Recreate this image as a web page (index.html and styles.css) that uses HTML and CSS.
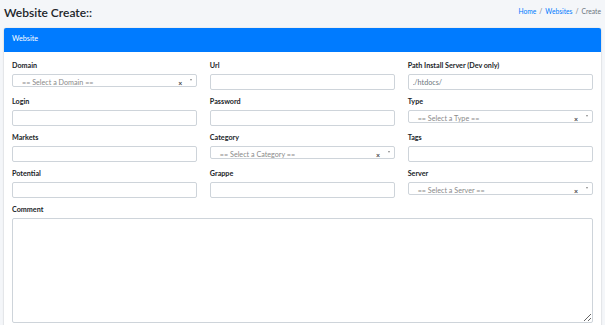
FILE: index.html
```html
<!DOCTYPE html>
<html lang="en">
<head>
    <meta charset="UTF-8">
    <title>Website Create</title>
    <link rel="stylesheet" href="styles.css">
</head>
<body>

<div class="content-header">
    <h1>Website Create::</h1>
    <ol class="breadcrumb">
        <li><a href="#">Home</a></li>
        <li class="sep">/</li>
        <li><a href="#">Websites</a></li>
        <li class="sep">/</li>
        <li class="active">Create</li>
    </ol>
</div>

<div class="card">
    <div class="card-header">Website</div>
    <div class="card-body">
        <div class="form-grid">
            <div class="form-group">
                <label>Domain</label>
                <div class="select2"><span class="sel-text">== Select a Domain ==</span><span class="sel-clear">×</span><span class="sel-arrow"></span></div>
            </div>
            <div class="form-group">
                <label>Url</label>
                <input class="form-control" type="text">
            </div>
            <div class="form-group">
                <label>Path Install Server (Dev only)</label>
                <input class="form-control" type="text" placeholder="./htdocs/">
            </div>

            <div class="form-group">
                <label>Login</label>
                <input class="form-control" type="text">
            </div>
            <div class="form-group">
                <label>Password</label>
                <input class="form-control" type="text">
            </div>
            <div class="form-group">
                <label>Type</label>
                <div class="select2"><span class="sel-text">== Select a Type ==</span><span class="sel-clear">×</span><span class="sel-arrow"></span></div>
            </div>

            <div class="form-group">
                <label>Markets</label>
                <input class="form-control" type="text">
            </div>
            <div class="form-group">
                <label>Category</label>
                <div class="select2"><span class="sel-text">== Select a Category ==</span><span class="sel-clear">×</span><span class="sel-arrow"></span></div>
            </div>
            <div class="form-group">
                <label>Tags</label>
                <input class="form-control" type="text">
            </div>

            <div class="form-group">
                <label>Potential</label>
                <input class="form-control" type="text">
            </div>
            <div class="form-group">
                <label>Grappe</label>
                <input class="form-control" type="text">
            </div>
            <div class="form-group">
                <label>Server</label>
                <div class="select2"><span class="sel-text">== Select a Server ==</span><span class="sel-clear">×</span><span class="sel-arrow"></span></div>
            </div>

            <div class="form-group full">
                <label>Comment</label>
                <textarea class="form-control comment"></textarea>
            </div>
        </div>
    </div>
</div>

</body>
</html>
```

FILE: styles.css
```css
body {
    margin: 0;
    background: #f4f6f9;
    font-family: Lato, "Noto Sans", sans-serif;
    color: #212529;
}

.content-header {
    display: flex;
    justify-content: space-between;
    align-items: flex-start;
    padding: 5px 4px 0 4px;
    height: 23px;
}
.content-header h1 {
    margin: 0;
    font-size: 12px;
    font-weight: 600;
    line-height: 16px;
}
.breadcrumb {
    display: flex;
    gap: 3px;
    list-style: none;
    margin: 1px 0 0 0;
    padding: 0;
    font-size: 6.7px;
    line-height: 10px;
}
.breadcrumb a { color: #007bff; text-decoration: none; }
.breadcrumb .sep, .breadcrumb .active { color: #6c757d; }

.card {
    margin: 0 4px;
    background: #fff;
    box-shadow: 0 0 1px rgba(0,0,0,.25), 0 1px 2px rgba(0,0,0,.15);
    border-radius: 2px;
    min-height: 320px;
}
.card-header {
    background: #007bff;
    color: #fff;
    font-size: 7.2px;
    height: 24px;
    line-height: 22px;
    padding: 0 8px;
    border-radius: 2px 2px 0 0;
}
.card-body {
    padding: 10px 8px;
}

.form-grid {
    display: grid;
    grid-template-columns: repeat(3, 1fr);
    column-gap: 12.5px;
    row-gap: 8px;
}
.form-group.full { grid-column: 1 / -1; }

label {
    display: block;
    font-size: 7.2px;
    font-weight: 700;
    line-height: 8px;
    margin-bottom: 4px;
}

.form-control {
    display: block;
    box-sizing: border-box;
    width: 100%;
    height: 16px;
    margin: 0;
    border: 1px solid #ced4da;
    border-radius: 2px;
    padding: 0 4px;
    font-family: inherit;
    font-size: 7.2px;
    background: #fff;
}
.form-control::placeholder { color: #6c757d; }

.comment {
    height: 105px;
    resize: vertical;
}

.select2 {
    position: relative;
    box-sizing: border-box;
    height: 12.5px;
    border: 1px solid #ced4da;
    border-radius: 2px;
    background: #fff;
    font-size: 7.2px;
    color: #999;
}
.sel-text {
    position: absolute;
    left: 9px;
    top: 2.5px;
    line-height: 10px;
    color: #8a8a8a;
}
.sel-clear {
    position: absolute;
    right: 14px;
    top: 3.5px;
    font-size: 7px;
    line-height: 9px;
    font-weight: 700;
    color: #444;
}
.sel-arrow {
    position: absolute;
    right: 4px;
    top: 4px;
    border-left: 1.5px solid transparent;
    border-right: 1.5px solid transparent;
    border-top: 2px solid #888;
}
```
